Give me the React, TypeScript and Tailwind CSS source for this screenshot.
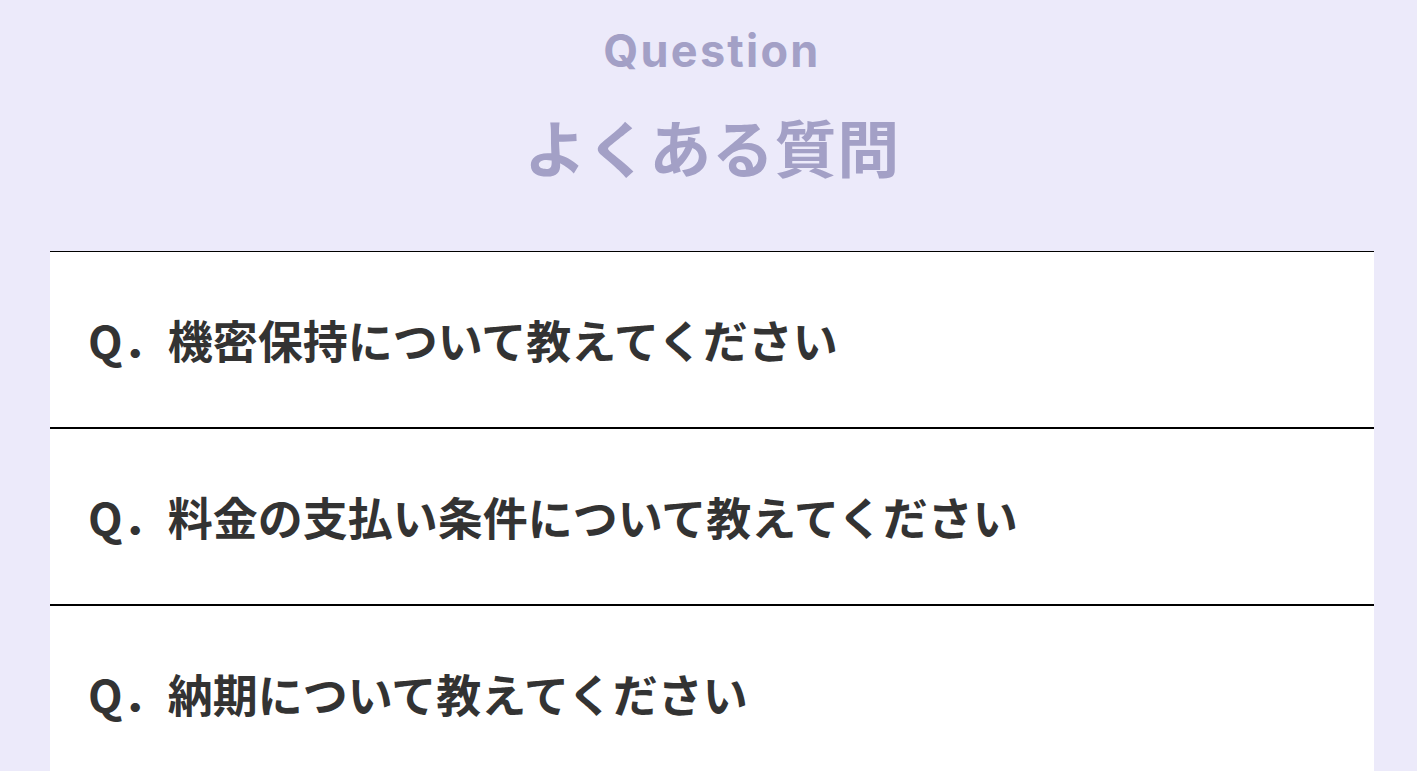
import React from "react";

const items = [
  "機密保持について教えてください",
  "料金の支払い条件について教えてください",
  "納期について教えてください",
];

export default function App() {
  return (
    <div className="min-h-screen w-full bg-[#ECEAFA] overflow-hidden">
      <div className="ml-[50px] w-[1324px] pt-[29px]">
        <div
          className="text-center text-[45px] leading-[44px] font-bold tracking-[0.05em] text-[#A3A0C6]"
          style={{ fontFamily: "Inter, 'Noto Sans', sans-serif" }}
        >
          Question
        </div>
        <h2
          className="mt-[42px] text-center text-[62px] leading-[62px] font-bold tracking-[0.01em] text-[#A3A0C6]"
          style={{ fontFamily: "'Noto Sans CJK JP', sans-serif" }}
        >
          よくある質問
        </h2>
        <div className="mt-[74px] flex flex-col">
          {items.map((q) => (
            <div
              key={q}
              className="flex h-[177px] items-center border-y border-black bg-white pl-[38px]"
            >
              <p
                className="text-[45px] leading-none font-bold text-[#333333]"
                style={{ fontFamily: "'Noto Sans CJK JP', sans-serif" }}
              >
                Q．{q}
              </p>
            </div>
          ))}
        </div>
      </div>
    </div>
  );
}
